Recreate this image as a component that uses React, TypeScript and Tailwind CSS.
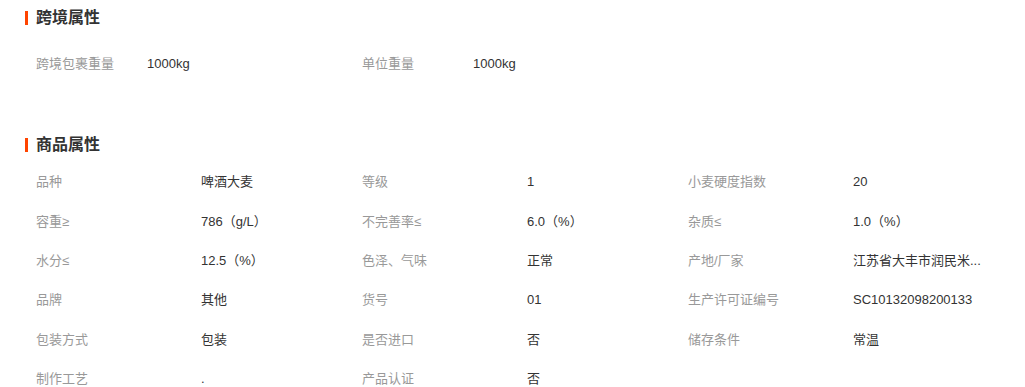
import React from 'react';

type Attr = { label: string; value: string };

const crossBorder: Attr[] = [
  { label: '跨境包裹重量', value: '1000kg' },
  { label: '单位重量', value: '1000kg' },
];

const product: Attr[] = [
  { label: '品种', value: '啤酒大麦' },
  { label: '等级', value: '1' },
  { label: '小麦硬度指数', value: '20' },
  { label: '容重≥', value: '786（g/L）' },
  { label: '不完善率≤', value: '6.0（%）' },
  { label: '杂质≤', value: '1.0（%）' },
  { label: '水分≤', value: '12.5（%）' },
  { label: '色泽、气味', value: '正常' },
  { label: '产地/厂家', value: '江苏省大丰市润民米...' },
  { label: '品牌', value: '其他' },
  { label: '货号', value: '01' },
  { label: '生产许可证编号', value: 'SC10132098200133' },
  { label: '包装方式', value: '包装' },
  { label: '是否进口', value: '否' },
  { label: '储存条件', value: '常温' },
  { label: '制作工艺', value: '.' },
  { label: '产品认证', value: '否' },
];

const Heading = ({ title }: { title: string }) => (
  <div className="flex h-[35px] items-center pl-[25px]">
    <span className="h-[14px] w-[3px] bg-[#ff4400]" />
    <span className="ml-[8px] text-[16px] font-bold leading-none text-[#333]">{title}</span>
  </div>
);

const AttrGrid = ({ items, labelWidth, rowHeight }: { items: Attr[]; labelWidth: string; rowHeight: string }) => (
  <div className="grid grid-cols-[326px_326px_326px] pl-[36px]">
    {items.map((it) => (
      <div key={it.label} className={`flex items-center text-[13px] leading-none ${rowHeight}`}>
        <span className={`shrink-0 text-[#999] ${labelWidth}`}>{it.label}</span>
        <span className="whitespace-nowrap text-[#333]">{it.value}</span>
      </div>
    ))}
  </div>
);

export default function App() {
  return (
    <div
      className="h-[387px] w-[1025px] overflow-hidden bg-white"
      style={{ fontFamily: '"Liberation Sans", "Noto Sans CJK SC", sans-serif' }}
    >
      <Heading title="跨境属性" />
      <div className="mt-[8px]">
        <AttrGrid items={crossBorder} labelWidth="w-[111px]" rowHeight="h-[40px]" />
      </div>
      <div className="mt-[44px]">
        <Heading title="商品属性" />
      </div>
      <AttrGrid items={product} labelWidth="w-[165px]" rowHeight="h-[39.4px]" />
    </div>
  );
}
